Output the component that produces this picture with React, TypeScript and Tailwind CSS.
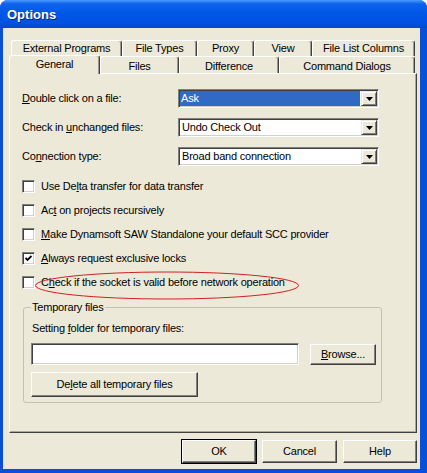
import React from 'react'

const topTabs = [
  { label: 'External Programs', w: 111 },
  { label: 'File Types', w: 75 },
  { label: 'Proxy', w: 57 },
  { label: 'View', w: 58 },
  { label: 'File List Columns', w: 103 },
]

const bottomTabs = [
  { label: 'Files', w: 79 },
  { label: 'Difference', w: 100 },
  { label: 'Command Dialogs', w: 136 },
]

function Tab({ label, w, pad = '' }: { label: string; w: number; pad?: string }) {
  return (
    <div
      className={`h-full flex items-center justify-center border-t border-l border-white border-r border-r-[#404040] rounded-t-[3px] shadow-[inset_-1px_0_0_#9d9a8a] ${pad}`}
      style={{ width: w }}
    >
      {label}
    </div>
  )
}

function DropArrow() {
  return (
    <div className="w-[16px] h-full bg-[#ece9d8] border-t border-l border-t-[#ece9d8] border-l-[#ece9d8] border-r border-b border-r-[#404040] border-b-[#404040] shadow-[inset_1px_1px_0_#ffffff,inset_-1px_-1px_0_#808080] flex items-center justify-center">
      <svg width="7" height="4" viewBox="0 0 7 4">
        <polygon points="0,0 7,0 3.5,4" fill="#000" />
      </svg>
    </div>
  )
}

function Combo({ value, selected = false }: { value: string; selected?: boolean }) {
  return (
    <div className="w-[201px] h-[19px] bg-white border border-t-[#808080] border-l-[#808080] border-b-white border-r-white shadow-[inset_1px_1px_0_#404040,inset_-1px_-1px_0_#d4d0c8] p-[1px] flex">
      <div className={`flex-1 flex items-center pl-[1px] mr-[1px] ${selected ? 'bg-[#316ac5] text-white' : 'pl-[2px]'}`}>
        {value}
      </div>
      <DropArrow />
    </div>
  )
}

function Check({ checked = false, children }: { checked?: boolean; children: React.ReactNode }) {
  return (
    <div className="flex items-center h-[13px]">
      <div className="w-[13px] h-[13px] bg-white border border-t-[#808080] border-l-[#808080] border-b-white border-r-white shadow-[inset_1px_1px_0_#404040,inset_-1px_-1px_0_#d4d0c8] flex items-center justify-center">
        {checked && (
          <svg width="7" height="7" viewBox="0 0 7 7">
            <polyline points="0.5,3 2.5,5 6.5,1" fill="none" stroke="#000" strokeWidth="1.8" />
          </svg>
        )}
      </div>
      <span className="ml-[6px]">{children}</span>
    </div>
  )
}

function Btn({ children, w, h, isDefault = false }: { children: React.ReactNode; w: number; h: number; isDefault?: boolean }) {
  return (
    <div
      className={`flex items-center justify-center bg-[#ece9d8] border-t border-l border-t-white border-l-white border-r border-b border-r-[#404040] border-b-[#404040] shadow-[inset_-1px_-1px_0_#808080] ${isDefault ? 'outline outline-1 outline-black' : ''}`}
      style={{ width: w, height: h }}
    >
      {children}
    </div>
  )
}

export default function App() {
  return (
    <div className="w-[427px] h-[473px] bg-[#0a4fd8] rounded-t-[8px] flex flex-col overflow-hidden font-['Liberation_Sans',Arial,sans-serif] text-[11px] tracking-[-0.2px] text-black leading-[13px]">
      <div className="h-[28px] px-[7px] flex items-center bg-[linear-gradient(to_bottom,#4a9bff_0%,#0d61ec_14%,#0057e6_50%,#0052e0_85%,#0a46cc_100%)]">
        <span className="text-white font-bold text-[13px] tracking-normal [text-shadow:1px_1px_0_#0a2a7a]">Options</span>
      </div>

      <div className="flex-1 ml-[3px] mr-[7px] mb-[4px] bg-[#ece9d8] pt-[12px] relative">
        {/* tab rows */}
        <div className="flex ml-[8px] h-[16px]">
          {topTabs.map((t) => (
            <Tab key={t.label} label={t.label} w={t.w} />
          ))}
        </div>
        <div className="flex ml-[6px] h-[17px]">
          <div className="relative z-10 -mt-[1px] h-[19px] w-[91px] flex items-center justify-center bg-[#ece9d8] border-t border-l border-white border-r border-r-[#404040] rounded-t-[3px] shadow-[inset_-1px_0_0_#9d9a8a] pb-[2px]">
            General
          </div>
          {bottomTabs.map((t) => (
            <Tab key={t.label} label={t.label} w={t.w} pad="pt-[3px]" />
          ))}
        </div>

        {/* panel */}
        <div className="relative ml-[6px] w-[408px] h-[360px] border-l border-t border-white border-r border-b border-r-[#404040] border-b-[#404040] shadow-[inset_-1px_-1px_0_#aca899] pt-[15px] px-[12px]">
          <div className="flex items-center">
            <div className="w-[156px]"><u>D</u>ouble click on a file:</div>
            <Combo value="Ask" selected />
          </div>
          <div className="flex items-center mt-[10px]">
            <div className="w-[156px]">Check in <u>u</u>nchanged files:</div>
            <Combo value="Undo Check Out" />
          </div>
          <div className="flex items-center mt-[10px]">
            <div className="w-[156px]">Co<u>n</u>nection type:</div>
            <Combo value="Broad band connection" />
          </div>

          <div className="flex flex-col gap-[11px] mt-[14px]">
            <Check>Use De<u>l</u>ta transfer for data transfer</Check>
            <Check>Ac<u>t</u> on projects recursively</Check>
            <Check><u>M</u>ake Dynamsoft SAW Standalone your default SCC provider</Check>
            <Check checked><u>A</u>lways request exclusive locks</Check>
            <Check>C<u>h</u>eck if the socket is valid before network operation</Check>
          </div>

          <div className="relative mt-[18px] ml-[1px] w-[359px] h-[96px] border border-[#c5c2b2] rounded-[3px] pt-[14px] pl-[7px]">
            <span className="absolute -top-[7px] left-[7px] px-[1px] bg-[#ece9d8]">Temporary files</span>
            <div className="ml-[1px]">Setting <u>f</u>older for temporary files:</div>
            <div className="flex items-center mt-[8px]">
              <div className="w-[268px] h-[22px] bg-white border border-t-[#808080] border-l-[#808080] border-b-white border-r-white shadow-[inset_1px_1px_0_#404040,inset_-1px_-1px_0_#d4d0c8]" />
              <div className="ml-[11px]">
                <Btn w={66} h={21}><u>B</u>rowse...</Btn>
              </div>
            </div>
            <div className="mt-[7px]">
              <Btn w={167} h={25}>De<u>l</u>ete all temporary files</Btn>
            </div>
          </div>

          {/* annotation ellipse */}
          <svg className="absolute left-[24px] top-[196px] pointer-events-none" width="266" height="31" viewBox="0 0 266 31">
            <ellipse cx="133" cy="15.5" rx="131.5" ry="13.5" fill="none" stroke="#d42020" strokeWidth="1" />
          </svg>
        </div>

        {/* bottom buttons */}
        <div className="flex justify-end gap-[6px] mt-[7px] mr-[3px]">
          <Btn w={74} h={23} isDefault>OK</Btn>
          <Btn w={75} h={23}>Cancel</Btn>
          <Btn w={74} h={23}>Help</Btn>
        </div>
      </div>
    </div>
  )
}
